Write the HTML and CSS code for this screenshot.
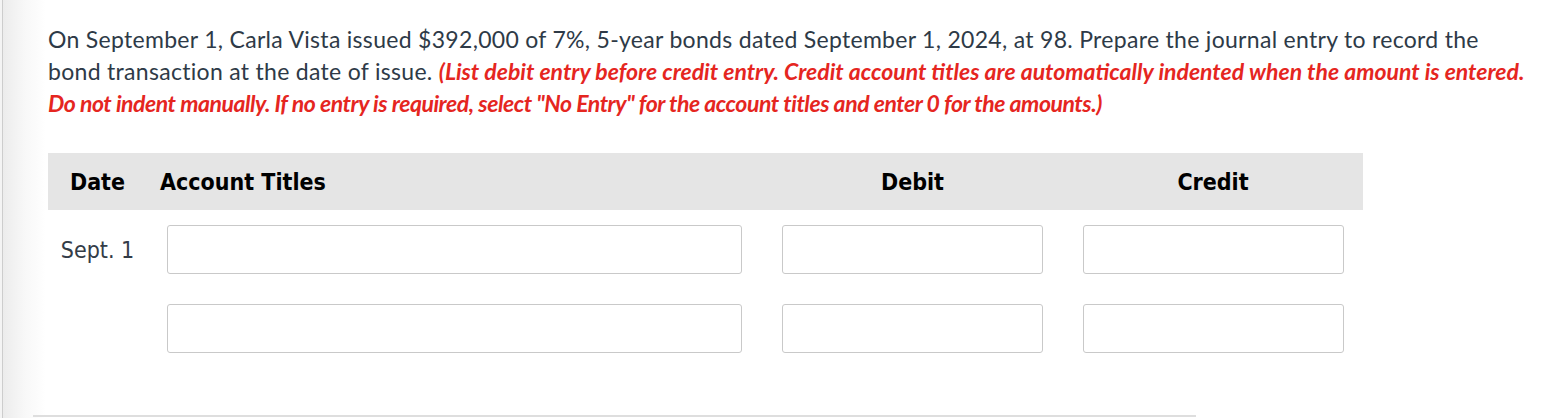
FILE: index.html
```html
<!DOCTYPE html>
<html>
<head>
<meta charset="utf-8">
<link rel="stylesheet" href="styles.css">
</head>
<body>
<div class="page">
  <p class="question">On September 1, Carla Vista issued $392,000 of 7%, 5-year bonds dated September 1, 2024, at 98. Prepare the journal entry to record the<br>bond transaction at the date of issue. <em class="note">(List debit entry before credit entry. Credit account titles are automatically indented when the amount is entered.<br><span class="tight">Do not indent manually. If no entry is required, select "No Entry" for the account titles and enter 0 for the amounts.)</span></em></p>

  <div class="journal">
    <div class="head">
      <div class="h-date">Date</div>
      <div class="h-acct">Account Titles</div>
      <div class="h-num">Debit</div>
      <div class="h-num">Credit</div>
    </div>
    <div class="row">
      <div class="c-date">Sept. 1</div>
      <div class="c-acct"><input class="field" type="text"></div>
      <div class="c-num"><input class="field" type="text"></div>
      <div class="c-num c-last"><input class="field" type="text"></div>
    </div>
    <div class="row">
      <div class="c-date"></div>
      <div class="c-acct"><input class="field" type="text"></div>
      <div class="c-num"><input class="field" type="text"></div>
      <div class="c-num c-last"><input class="field" type="text"></div>
    </div>
  </div>
  <div class="divider"></div>
</div>
</body>
</html>
```

FILE: styles.css
```css
html, body {
  margin: 0;
  padding: 0;
  height: 100%;
}
body {
  background: linear-gradient(to right, #f4f4f4 0, #f4f4f4 2px, #cdcdcd 2px, #cdcdcd 3px, #ececec 3px, #f8f8f8 25px, #ffffff 46px);
  overflow: hidden;
}
.page {
  padding: 23px 0 0 48px;
}
.question {
  margin: 0;
  font-family: Lato, "Open Sans", sans-serif;
  font-size: 23px;
  line-height: 32px;
  letter-spacing: 0.3px;
  color: #2e3a47;
  white-space: nowrap;
}
.note {
  color: #e5261f;
  font-weight: 700;
  font-style: italic;
  letter-spacing: 0;
}
.tight {
  letter-spacing: -0.45px;
}
.journal {
  margin-top: 34px;
  width: 1315px;
}
.head, .row {
  display: grid;
  grid-template-columns: 99px 615px 301px 300px;
  align-items: center;
}
.head {
  height: 57px;
  background: #e5e5e5;
  font-family: "DejaVu Sans Condensed", "DejaVu Sans", sans-serif;
  font-weight: 700;
  font-size: 23px;
  color: #000;
}
.h-date {
  text-align: center;
}
.h-acct {
  padding-left: 13px;
}
.h-num {
  text-align: center;
}
.row {
  margin-top: 15px;
}
.row + .row {
  margin-top: 30px;
}
.c-date {
  text-align: center;
  font-family: "DejaVu Sans Condensed", "DejaVu Sans", sans-serif;
  font-size: 23px;
  color: #333c47;
}
.c-acct, .c-num {
  padding: 0 20px;
}
.c-last {
  padding-right: 19px;
}
.field {
  display: block;
  box-sizing: border-box;
  width: 100%;
  height: 49px;
  margin: 0;
  border: 1px solid #c9c9c9;
  border-radius: 3px;
  background: #fff;
}
.divider {
  margin: 62px 0 0 -15px;
  width: 1163px;
  height: 2px;
  background: #dedede;
}
```
